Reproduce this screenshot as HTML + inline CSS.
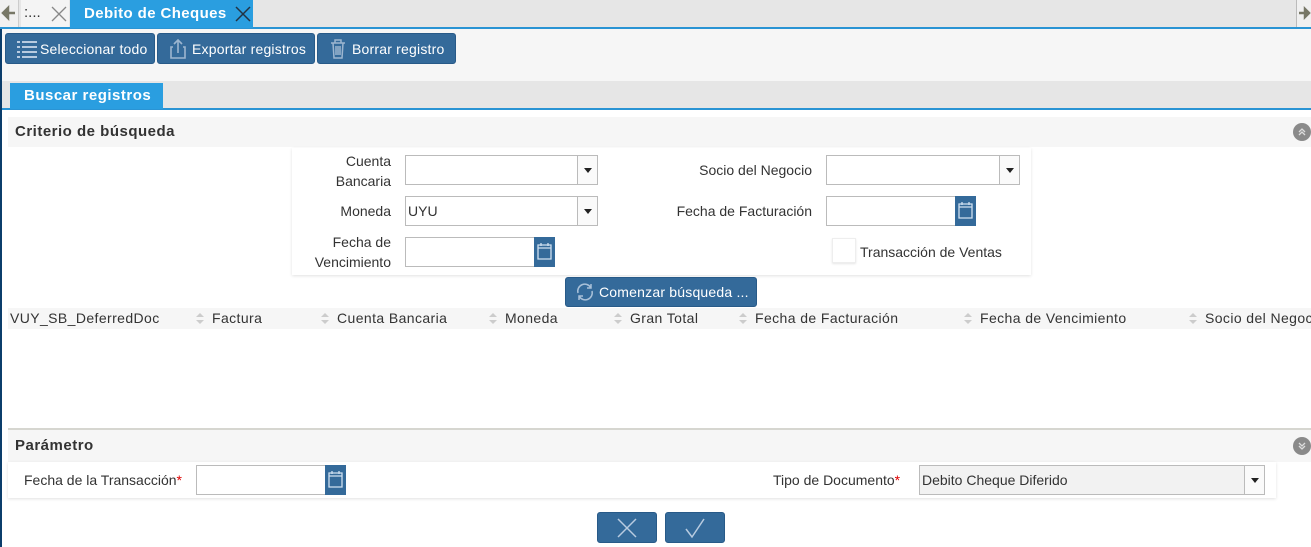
<!DOCTYPE html>
<html><head><meta charset="utf-8"><style>
*{box-sizing:border-box;margin:0;padding:0}
body{width:1311px;height:547px;overflow:hidden;background:#fff;font-family:"Liberation Sans",sans-serif;font-size:14px;color:#333;position:relative}
.a{position:absolute}
.btn{position:absolute;background:#346a9a;color:#fff;border-radius:3px;border:1px solid #285a88;font-size:14px;display:flex;align-items:center;letter-spacing:.2px}
.inp{position:absolute;background:#fff;border:1px solid #bbb;height:30px}
.dd{position:absolute;right:0;top:0;width:20px;height:28px;border-left:1px solid #bbb;background:#fafafa}
.dd:after{content:"";position:absolute;left:6px;top:12px;border:4px solid transparent;border-top:5px solid #222}
.cal{position:absolute;right:-1px;top:-1px;width:21px;height:30px;background:#346a9a}
.lbl{position:absolute;text-align:right;font-size:14px;color:#333;line-height:20px}
.th{position:absolute;top:310px;font-size:14px;color:#333;letter-spacing:.4px;white-space:nowrap}
.sort{position:absolute;top:313px;width:8px;height:12px}
.sort:before{content:"";position:absolute;left:0;top:0;border:4px solid transparent;border-bottom:4px solid #ccc;border-top:0}
.sort:after{content:"";position:absolute;left:0;top:7px;border:4px solid transparent;border-top:4px solid #ccc;border-bottom:0}
.hd{letter-spacing:.5px}
</style></head><body>
<div class="a" style="left:0;top:0;width:1311px;height:27px;background:#e6e6e6"></div>
<div class="a" style="left:0;top:27px;width:1311px;height:2px;background:#2a94d4"></div>
<div class="a" style="left:0;top:0;width:19px;height:27px;background:#f0f0f0;border-right:1px solid #ccc"><svg width="18" height="27"><path d="M3 13H15M3 13L8 8V18Z" stroke="#776" stroke-width="2.5" fill="#776"/></svg></div>
<div class="a" style="left:21px;top:0;width:48px;height:27px;background:#f4f4f4;font-size:15px;line-height:26px;padding-left:3px">:...</div>
<svg class="a" style="left:51px;top:6px" width="16" height="16"><path d="M1 1L15 15M15 1L1 15" stroke="#888" stroke-width="1.3"/></svg>
<div class="a" style="left:70px;top:0;width:183px;height:28px;background:#2a9ee0;color:#fff;font-weight:bold;font-size:15px;line-height:27px;padding-left:14px;letter-spacing:.4px">Debito de Cheques</div>
<svg class="a" style="left:235px;top:6px" width="16" height="16"><path d="M1 1L15 15M15 1L1 15" stroke="#234" stroke-width="1.5"/></svg>
<div class="a" style="left:1296px;top:0;width:15px;height:27px;background:#f0f0f0;border-left:1px solid #bbb"><svg width="15" height="27"><path d="M2 13H12M12 13L8 9V17Z" stroke="#776" stroke-width="2.5" fill="#776"/></svg></div>
<div class="a" style="left:0;top:29px;width:2px;height:518px;background:#0b3d6b"></div>
<div class="a" style="left:2px;top:29px;width:1309px;height:52px;background:#f6f6f6"></div>
<div class="btn" style="left:5px;top:33px;width:150px;height:31px;padding-left:10px">
<svg width="22" height="20" style="margin-right:2px"><g fill="#b8cbe0"><rect x="1" y="2" width="3" height="2"/><rect x="6" y="2" width="15" height="2"/><rect x="1" y="7" width="3" height="2"/><rect x="6" y="7" width="15" height="2"/><rect x="1" y="12" width="3" height="2"/><rect x="6" y="12" width="15" height="2"/><rect x="1" y="17" width="3" height="2"/><rect x="6" y="17" width="15" height="2"/></g></svg>Seleccionar todo</div>
<div class="btn" style="left:157px;top:33px;width:158px;height:31px;padding-left:10px">
<svg width="20" height="22" style="margin-right:4px"><path d="M5 9H3V20H17V9H15M10 15V2M6 6L10 2L14 6" stroke="#9db6d0" stroke-width="1.6" fill="none"/></svg>Exportar registros</div>
<div class="btn" style="left:317px;top:33px;width:139px;height:31px;padding-left:11px">
<svg width="18" height="22" style="margin-right:5px"><path d="M2 5H16M6 5V2H12V5M4 5L5 20H13L14 5M7 8V17M9 8V17M11 8V17" stroke="#9db6d0" stroke-width="1.5" fill="none"/></svg>Borrar registro</div>
<div class="a" style="left:2px;top:81px;width:1309px;height:27px;background:#e6e6e6"></div>
<div class="a" style="left:2px;top:108px;width:1309px;height:2px;background:#2a94d4"></div>
<div class="a hd" style="left:10px;top:83px;width:153px;height:26px;background:#2a9ee0;color:#fff;font-weight:bold;font-size:15px;line-height:26px;padding-left:14px">Buscar registros</div>
<div class="a hd" style="left:8px;top:117px;width:1303px;height:30px;background:#f6f6f6;font-weight:bold;font-size:15px;line-height:30px;padding-left:7px">Criterio de búsqueda</div>
<div class="a" style="left:1293px;top:123px;width:18px;height:18px;border-radius:50%;background:#8a8a8a"><svg width="18" height="18"><path d="M6 9L9 6L12 9M6 12L9 9L12 12" stroke="#ddd" stroke-width="1.3" fill="none"/></svg></div>
<div class="a" style="left:292px;top:148px;width:739px;height:127px;background:#fff;box-shadow:0 1px 3px rgba(0,0,0,.12)"></div>
<div class="lbl" style="left:300px;top:151px;width:91px">Cuenta<br>Bancaria</div>
<div class="inp" style="left:405px;top:155px;width:193px"><div class="dd"></div></div>
<div class="lbl" style="left:600px;top:160px;width:212px">Socio del Negocio</div>
<div class="inp" style="left:826px;top:155px;width:194px"><div class="dd"></div></div>
<div class="lbl" style="left:300px;top:201px;width:91px">Moneda</div>
<div class="inp" style="left:405px;top:196px;width:193px;padding:3px 2px;line-height:22px">UYU<div class="dd"></div></div>
<div class="lbl" style="left:600px;top:201px;width:212px">Fecha de Facturación</div>
<div class="inp" style="left:826px;top:196px;width:150px"><div class="cal"><svg width="21" height="30"><path d="M4 8H17V22H4ZM4 11H17M7 6V9M14 6V9" stroke="#cfe0f0" stroke-width="1.3" fill="none"/></svg></div></div>
<div class="lbl" style="left:300px;top:232px;width:91px">Fecha de<br>Vencimiento</div>
<div class="inp" style="left:405px;top:237px;width:150px"><div class="cal"><svg width="21" height="30"><path d="M4 8H17V22H4ZM4 11H17M7 6V9M14 6V9" stroke="#cfe0f0" stroke-width="1.3" fill="none"/></svg></div></div>
<div class="a" style="left:832px;top:238px;width:24px;height:25px;background:#fff;border:1px solid #eee;box-shadow:0 1px 2px rgba(0,0,0,.1)"></div>
<div class="lbl" style="left:860px;top:242px;text-align:left">Transacción de Ventas</div>
<div class="btn" style="left:565px;top:277px;width:192px;height:30px;padding-left:8px;font-size:14px">
<svg width="22" height="22" style="margin-right:3px"><path d="M4 12A7 7 0 0 1 17 7M18 10A7 7 0 0 1 5 15M17 3V7H13M5 19V15H9" stroke="#a8c0d8" stroke-width="1.5" fill="none"/></svg>Comenzar búsqueda ...</div>
<div class="a" style="left:8px;top:308px;width:1303px;height:21px;background:#f6f6f6"></div>
<div class="th" style="left:10px">VUY_SB_DeferredDoc</div>
<div class="sort" style="left:196px"></div><div class="th" style="left:212px">Factura</div>
<div class="sort" style="left:321px"></div><div class="th" style="left:337px">Cuenta Bancaria</div>
<div class="sort" style="left:489px"></div><div class="th" style="left:505px">Moneda</div>
<div class="sort" style="left:614px"></div><div class="th" style="left:630px">Gran Total</div>
<div class="sort" style="left:739px"></div><div class="th" style="left:755px">Fecha de Facturación</div>
<div class="sort" style="left:964px"></div><div class="th" style="left:980px">Fecha de Vencimiento</div>
<div class="sort" style="left:1189px"></div><div class="th" style="left:1205px">Socio del Negocio</div>
<div class="a" style="left:8px;top:428px;width:1303px;height:2px;background:#d6d6d0"></div>
<div class="a hd" style="left:8px;top:430px;width:1303px;height:32px;background:#f6f6f6;font-weight:bold;font-size:15px;line-height:32px;padding-left:7px">Parámetro</div>
<div class="a" style="left:1293px;top:437px;width:18px;height:18px;border-radius:50%;background:#8a8a8a"><svg width="18" height="18"><path d="M6 6L9 9L12 6M6 9L9 12L12 9" stroke="#ddd" stroke-width="1.3" fill="none"/></svg></div>
<div class="a" style="left:8px;top:462px;width:1268px;height:36px;background:#fff;box-shadow:0 1px 3px rgba(0,0,0,.12)"></div>
<div class="lbl" style="left:24px;top:470px">Fecha de la Transacción<span style="color:#d00">*</span></div>
<div class="inp" style="left:196px;top:465px;width:150px"><div class="cal"><svg width="21" height="30"><path d="M4 8H17V22H4ZM4 11H17M7 6V9M14 6V9" stroke="#cfe0f0" stroke-width="1.3" fill="none"/></svg></div></div>
<div class="lbl" style="left:773px;top:470px;text-align:left">Tipo de Documento<span style="color:#d00">*</span></div>
<div class="inp" style="left:919px;top:465px;width:346px;background:#f2f2f2;padding:3px 2px;line-height:22px">Debito Cheque Diferido<div class="dd"></div></div>
<div class="btn" style="left:597px;top:512px;width:60px;height:31px;justify-content:center"><svg width="22" height="22"><path d="M2 2L20 20M20 2L2 20" stroke="#b8cbe0" stroke-width="1.5"/></svg></div>
<div class="btn" style="left:665px;top:512px;width:60px;height:31px;justify-content:center"><svg width="22" height="22"><path d="M2 12L8 20L20 2" stroke="#b8cbe0" stroke-width="1.5" fill="none"/></svg></div>
</body></html>
